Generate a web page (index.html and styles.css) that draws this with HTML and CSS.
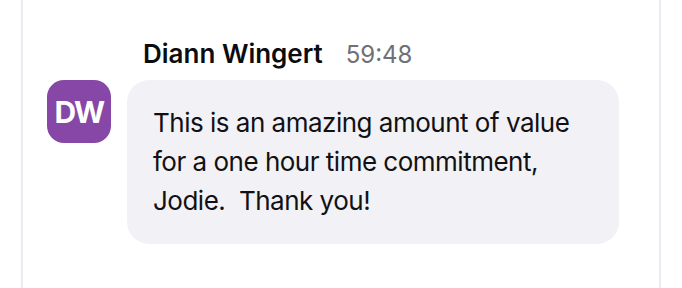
FILE: index.html
```html
<!DOCTYPE html>
<html lang="en">
<head>
    <meta charset="UTF-8">
    <meta name="viewport" content="width=device-width, initial-scale=1.0">
    <title>Chat</title>
    <link rel="stylesheet" href="styles.css">
</head>
<body>
    <div class="chat">
        <div class="message">
            <div class="header">
                <span class="name">Diann Wingert</span>
                <span class="time">59:48</span>
            </div>
            <div class="avatar">DW</div>
            <div class="bubble">This is an amazing amount of value for a one hour time commitment, Jodie.&nbsp; Thank you!</div>
        </div>
    </div>
</body>
</html>
```

FILE: styles.css
```css
body {
    margin: 0;
    background-color: #fff;
    font-family: Inter, "Noto Sans", sans-serif;
    color: #111114;
}
.chat {
    margin-left: 21px;
    width: 636px;
    height: 288px;
    border-left: 2px solid #ebeaf1;
    border-right: 2px solid #ebeaf1;
}
.message {
    display: grid;
    grid-template-columns: 64px 1fr;
    column-gap: 16px;
    padding: 38px 40px 0 24px;
}
.header {
    grid-column: 2;
    display: flex;
    align-items: baseline;
    gap: 23px;
    padding-left: 16px;
    margin-bottom: 9px;
    line-height: 32px;
}
.name {
    font-size: 26px;
    font-weight: 600;
    color: #0c0c0e;
}
.time {
    font-size: 24px;
    color: #6f7078;
}
.avatar {
    grid-column: 1;
    width: 64px;
    height: 63px;
    border-radius: 17px;
    background-color: #8747a7;
    color: #fff;
    font-size: 30px;
    font-weight: 700;
    letter-spacing: -1.5px;
    display: flex;
    align-items: center;
    justify-content: center;
}
.bubble {
    grid-column: 2;
    background-color: #f2f1f6;
    border-radius: 22px;
    padding: 23px 26px 24px;
    font-size: 26px;
    letter-spacing: -0.5px;
    line-height: 39px;
}
```
